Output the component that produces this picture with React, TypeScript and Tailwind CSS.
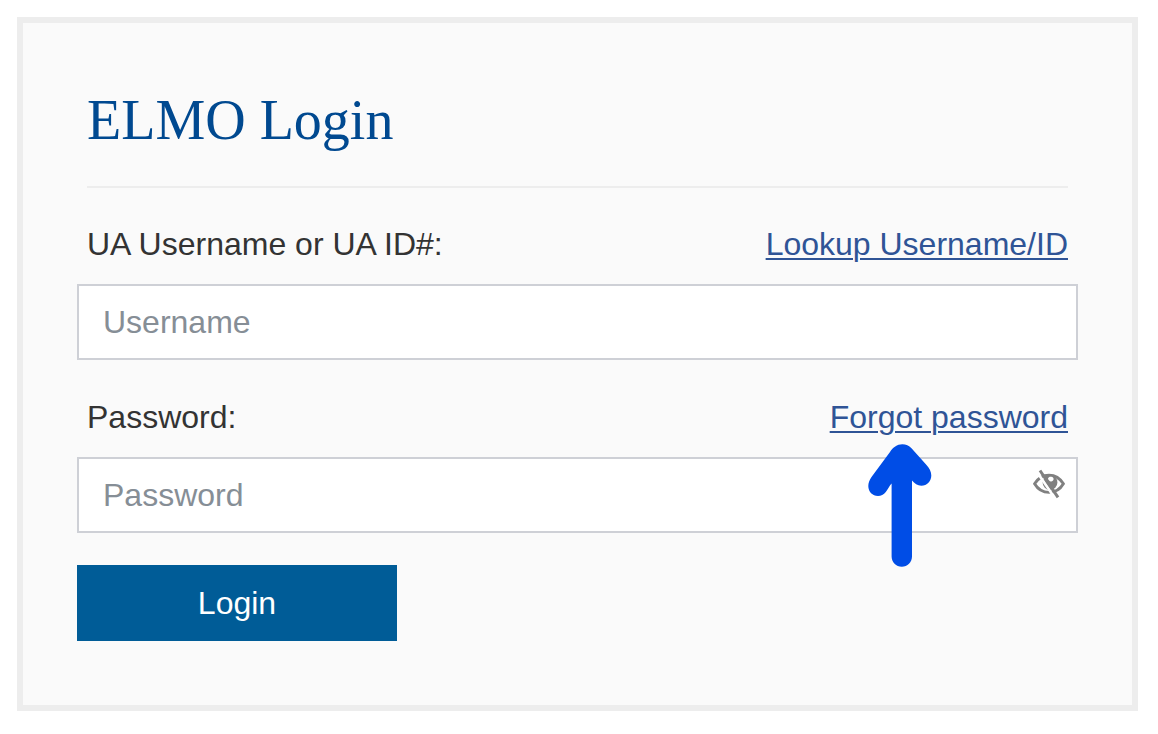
import React, { useState } from 'react';

interface FieldProps {
  id: string;
  label: string;
  linkText: string;
  placeholder: string;
  type: string;
  children?: React.ReactNode;
}

const Field: React.FC<FieldProps> = ({ id, label, linkText, placeholder, type, children }) => (
  <div className="relative">
    <div className="mb-[14px] flex items-center justify-between px-[10px] leading-[51px]">
      <label htmlFor={id}>{label}</label>
      <a href="#" className="text-[#2f5496] underline decoration-2 underline-offset-3">{linkText}</a>
    </div>
    <input
      id={id}
      name={id}
      type={type}
      placeholder={placeholder}
      className="block h-19 w-full border-2 border-[#ced0d6] bg-white px-6 placeholder:text-[#868e96] outline-none focus:border-[#005c97]"
    />
    {children}
  </div>
);

const EyeSlash = () => (
  <svg viewBox="0 0 32 30" className="h-[30px] w-8" fill="none" aria-hidden="true">
    <path d="M1.600 14.800C5 9.200 10 6.200 16 6.200s11 3 14.400 8.600c-3.400 5.800-8.400 8.600-14.400 8.600S5 20.600 1.600 14.800z" stroke="#808080" strokeWidth="2.900" />
    <circle cx="17" cy="13.500" r="7.400" fill="#808080" />
    <path d="M15 9.500c.5-1.500 1.800-2 3.200-1.800 1.500.2 2.500 1.200 2.400 2.500s-1.300 2.300-2.700 2.200-2.500-1-2.900-2.900z" fill="#fff" />
    {/* light edge that separates the slash from the eye */}
    <path d="M4.300 3.500L21.800 29" stroke="#fff" strokeWidth="2.600" />
    <path d="M7 1.500L25 28.300" stroke="#808080" strokeWidth="3" />
  </svg>
);

const Arrow = () => (
  <svg
    viewBox="0 0 64 124"
    className="pointer-events-none absolute top-[52px] right-[146px] h-[124px] w-16"
    fill="#004de6"
    aria-hidden="true"
  >
    <path d="M34.300 .3C38 .3 41 1.600 43.500 4.300L58.500 21C61.500 24.300 63.300 27.500 63.300 31.500C63.300 37.300 59 41.700 53.300 41.700C49.500 41.700 46.500 39.500 44 36.500V112.500C44 118.300 39.500 122.700 33.800 122.700S23.600 118.300 23.600 112.500V39.500C21.500 41.500 20 45 17.800 48C15.700 50.800 13 52 10 52C4.500 52 .3 47.700 .3 42C.3 39 1.500 36 3.500 33L22 8C25 3.500 29 .3 34.300 .3z" />
  </svg>
);

const App: React.FC = () => {
  const [showPassword, setShowPassword] = useState(false);

  return (
    <main className="bg-white pt-[17px] pr-5 pb-[23px] pl-[17px] font-['Liberation_Sans',Arial,sans-serif] text-[32px] text-[#333]">
      <form
        onSubmit={e => e.preventDefault()}
        className="border-6 border-[#ededed] bg-[#fafafa] px-[54px] py-16"
      >
        <h1 className="mx-[10px] mb-[31px] border-b-2 border-[#ededed] pb-8 font-['Liberation_Serif','Times_New_Roman',serif] text-[56px] leading-[67px] text-[#004990]">
          ELMO Login
        </h1>

        <div className="flex flex-col gap-8">
          <Field
            id="username"
            label="UA Username or UA ID#:"
            linkText="Lookup Username/ID"
            placeholder="Username"
            type="text"
          />
          <Field
            id="password"
            label="Password:"
            linkText="Forgot password"
            placeholder="Password"
            type={showPassword ? 'text' : 'password'}
          >
            <button
              type="button"
              aria-label="Show password"
              onClick={() => setShowPassword(!showPassword)}
              className="absolute right-[13px] bottom-[34px]"
            >
              <EyeSlash />
            </button>
            <Arrow />
          </Field>
          <button type="submit" className="h-19 w-80 bg-[#005c97] text-white">
            Login
          </button>
        </div>
      </form>
    </main>
  );
};

export default App;
